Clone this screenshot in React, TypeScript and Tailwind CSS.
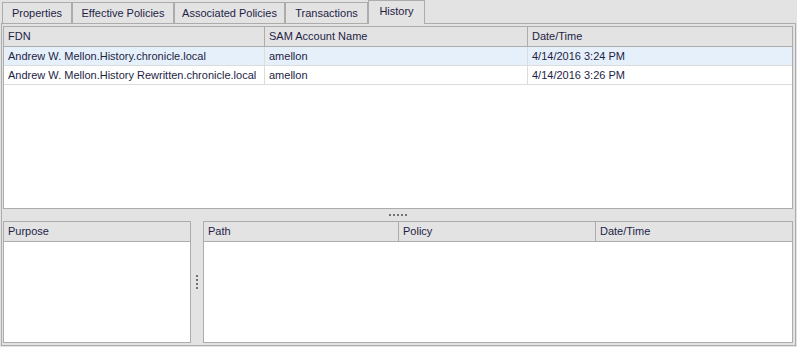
import React from "react";

const tabs = [
  { label: "Properties", w: "w-[70px]" },
  { label: "Effective Policies", w: "w-[102px]" },
  { label: "Associated Policies", w: "w-[111px]" },
  { label: "Transactions", w: "w-[83px]" },
  { label: "History", w: "w-[57px]", active: true },
];

const rows = [
  {
    fdn: "Andrew W. Mellon.History.chronicle.local",
    sam: "amellon",
    date: "4/14/2016 3:24 PM",
    selected: true,
  },
  {
    fdn: "Andrew W. Mellon.History Rewritten.chronicle.local",
    sam: "amellon",
    date: "4/14/2016 3:26 PM",
  },
];

const HeaderCell = ({ children, last }: { children: React.ReactNode; last?: boolean }) => (
  <div
    className={`h-full flex items-center pl-[4px] truncate ${
      last ? "" : "border-r border-[#acacac]"
    }`}
  >
    {children}
  </div>
);

const App = () => {
  return (
    <div
      className="w-[797px] h-[347px] bg-[#e3e3e3] overflow-hidden flex flex-col text-[11px] text-[#1e1e46]"
      style={{ fontFamily: '"Liberation Sans", Arial, sans-serif' }}
    >
      {/* Tab strip */}
      <div className="h-[23px] flex items-end pl-[2px] shrink-0">
        {tabs.map((t) => (
          <div
            key={t.label}
            className={`${t.w} flex items-center justify-center border border-b-0 border-[#acacac] bg-[#e3e3e3] ${
              t.active ? "h-[24px] -mb-px relative z-10 pb-[2px]" : "h-[21px]"
            }`}
          >
            {t.label}
          </div>
        ))}
      </div>

      {/* Tab page */}
      <div className="flex-1 min-h-0 ml-[1px] mr-[1px] mb-[1px] border border-[#acacac] pl-[1px] pt-[2px] pr-[2px] pb-[2px] flex flex-col">
        {/* Upper grid */}
        <div className="h-[183px] shrink-0 border border-[#acacac] bg-white flex flex-col">
          <div className="h-[20px] grid grid-cols-[261px_263px_1fr] bg-[#e3e3e3] border-b border-[#acacac]">
            <HeaderCell>FDN</HeaderCell>
            <HeaderCell>SAM Account Name</HeaderCell>
            <HeaderCell last>Date/Time</HeaderCell>
          </div>
          {rows.map((r) => (
            <div
              key={r.fdn}
              className={`h-[19px] grid grid-cols-[261px_263px_1fr] border-b border-[#dcdcdc] ${
                r.selected ? "bg-[#e6f0fa]" : "bg-white"
              }`}
            >
              <div className="flex items-center pl-[4px] border-r border-[#dcdcdc] truncate">{r.fdn}</div>
              <div className="flex items-center pl-[4px] border-r border-[#dcdcdc]">{r.sam}</div>
              <div className="flex items-center pl-[4px]">{r.date}</div>
            </div>
          ))}
        </div>

        {/* Horizontal splitter */}
        <div className="h-[12px] shrink-0 flex items-center justify-center gap-[2px] pb-[1px]">
          {[0, 1, 2, 3, 4].map((i) => (
            <div key={i} className="w-[2px] h-[2px] bg-[#727272]" />
          ))}
        </div>

        {/* Lower panels */}
        <div className="flex-1 min-h-0 flex">
          <div className="w-[188px] shrink-0 border border-[#acacac] bg-white flex flex-col">
            <div className="h-[20px] bg-[#e3e3e3] border-b border-[#acacac] flex items-center pl-[4px]">
              Purpose
            </div>
          </div>

          {/* Vertical splitter */}
          <div className="w-[12px] shrink-0 flex flex-col items-center justify-center gap-[2px]">
            {[0, 1, 2, 3].map((i) => (
              <div key={i} className="w-[2px] h-[2px] bg-[#727272]" />
            ))}
          </div>

          <div className="flex-1 border border-[#acacac] bg-white flex flex-col">
            <div className="h-[20px] grid grid-cols-[195px_197px_1fr] bg-[#e3e3e3] border-b border-[#acacac]">
              <HeaderCell>Path</HeaderCell>
              <HeaderCell>Policy</HeaderCell>
              <HeaderCell last>Date/Time</HeaderCell>
            </div>
          </div>
        </div>
      </div>
    </div>
  );
};

export default App;
